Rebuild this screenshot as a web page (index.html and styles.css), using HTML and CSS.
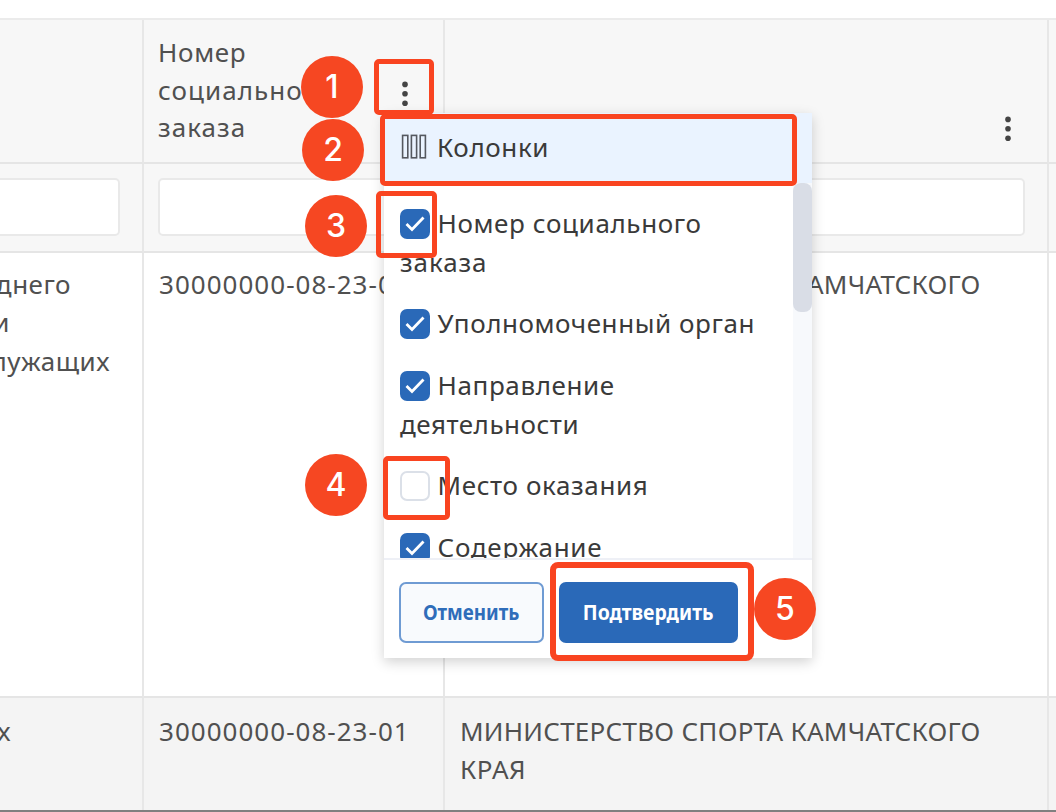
FILE: index.html
```html
<!DOCTYPE html>
<html lang="ru">
<head>
<meta charset="utf-8">
<title>Колонки</title>
<link rel="stylesheet" href="styles.css">
</head>
<body>
<main class="page">
  <div class="grid">
    <div class="cell head"></div>
    <div class="cell head"><span class="t-nomer">Номер</span><span class="t-soc">социального</span><span class="t-zakaza">заказа</span></div>
    <div class="cell head head-menu"><svg class="dots" viewBox="0 0 8 26"><circle cx="4" cy="3.4" r="2.8"/><circle cx="4" cy="12.8" r="2.8"/><circle cx="4" cy="22.2" r="2.8"/></svg></div>
    <div class="cell head"></div>

    <div class="cell filter first"><div class="input"></div></div>
    <div class="cell filter"><div class="input"></div></div>
    <div class="cell filter"><div class="input"></div></div>
    <div class="cell filter"></div>

    <div class="cell row cut"><span class="t-dnego">среднего</span><span class="t-i">и</span><span class="t-sluz">служащих</span></div>
    <div class="cell row"><span class="t-num">30000000-08-23-01</span></div>
    <div class="cell row"><span class="t-min">МИНИСТЕРСТВО СПОРТА КАМЧАТСКОГО</span></div>
    <div class="cell row"></div>

    <div class="cell row alt cut"><span class="t-x">х</span></div>
    <div class="cell row alt"><span class="t-num">30000000-08-23-01</span></div>
    <div class="cell row alt"><span class="t-min">МИНИСТЕРСТВО СПОРТА КАМЧАТСКОГО</span><span class="t-kraya">КРАЯ</span></div>
    <div class="cell row alt"></div>
  </div>

  <svg class="dots dots-over" viewBox="0 0 8 26"><circle cx="4" cy="3.4" r="2.8"/><circle cx="4" cy="12.8" r="2.8"/><circle cx="4" cy="22.2" r="2.8"/></svg>

  <section class="popup">
    <header class="popup-title">
      <svg class="cols" viewBox="0 0 26 26"><rect x="1.6" y="1.4" width="5.2" height="22.4"/><rect x="10.4" y="1.4" width="5.2" height="22.4"/><rect x="19.2" y="1.4" width="5.2" height="22.4"/></svg>
      <span class="p-kol">Колонки</span>
    </header>
    <div class="list-wrap">
      <div class="list">
        <div class="item"><i class="check"><svg viewBox="0 0 30 30"><path d="M6.5 15 12 20.5 23.5 8.5"/></svg></i><span class="p-nom">Номер социального</span><br><span class="p-zak">заказа</span></div>
        <div class="item"><i class="check"><svg viewBox="0 0 30 30"><path d="M6.5 15 12 20.5 23.5 8.5"/></svg></i><span class="p-upo">Уполномоченный орган</span></div>
        <div class="item"><i class="check"><svg viewBox="0 0 30 30"><path d="M6.5 15 12 20.5 23.5 8.5"/></svg></i><span class="p-nap">Направление</span><br><span class="p-dey">деятельности</span></div>
        <div class="item"><i class="check off"></i><span class="p-mes">Место оказания</span></div>
        <div class="item"><i class="check"><svg viewBox="0 0 30 30"><path d="M6.5 15 12 20.5 23.5 8.5"/></svg></i><span class="p-sod">Содержание</span></div>
      </div>
      <div class="scroll"><div class="thumb"></div></div>
    </div>
    <footer class="actions">
      <button class="btn cancel"><span>Отменить</span></button>
      <button class="btn ok"><span>Подтвердить</span></button>
    </footer>
  </section>

  <div class="mark m1"></div>
  <div class="mark m2"></div>
  <div class="mark m3"></div>
  <div class="mark m4"></div>
  <div class="mark m5"></div>
  <div class="pin p1">1</div>
  <div class="pin p2">2</div>
  <div class="pin p3">3</div>
  <div class="pin p4">4</div>
  <div class="pin p5">5</div>
</main>
</body>
</html>
```
FILE: styles.css
```css
* { box-sizing: border-box; }
body { margin: 0; background: #fff; font-family: "Noto Sans", sans-serif; font-size: 26px; color: #505050; }
.page { position: relative; width: 1056px; height: 812px; overflow: hidden; padding-top: 18px; border-bottom: 2px solid #808080; }
span { white-space: nowrap; }

.grid { display: grid; grid-template-columns: 144px 301px 604px 20px; grid-template-rows: 144px 89px 445px 120px; border-top: 2px solid #ebebeb; }
.cell { border-right: 2px solid #e7e7e7; border-bottom: 2px solid #e5e5e5; padding: 14px 14px 0 15px; overflow: hidden; }
.cell span { display: block; }
.head { background: #f7f7f7; line-height: 37.5px; padding-left: 14px; }
.head-menu { display: flex; justify-content: flex-end; align-items: flex-end; padding: 0 35px 20px 0; }
.filter { background: #f7f7f7; padding: 14px 22px 0 14px; }
.first { padding-left: 0; }
.first .input { border-left: 0; border-radius: 0 5px 5px 0; }
.input { height: 58px; border: 2px solid #e9e9e9; border-radius: 5px; background: #fff; }
.row { line-height: 38.3px; padding-top: 12px; }
.alt { background: #f4f4f4; padding-top: 14px; }
.cut { display: flex; flex-direction: column; align-items: flex-end; letter-spacing: .5px; }
.cut .t-dnego { margin-right: 57px; }
.cut .t-i { margin-right: 118px; }
.cut .t-sluz { margin-right: 18px; }
.cut .t-x { margin-right: 117px; }
.t-nomer { letter-spacing: .7px; }
.t-soc, .t-zakaza { letter-spacing: 1.05px; }
.t-num { letter-spacing: 1.02px; }
.t-min { letter-spacing: .26px; }
.t-kraya { letter-spacing: .6px; }
.dots { width: 8px; height: 26px; fill: #444; }
.dots-over { position: absolute; left: 401px; top: 81px; }

.popup { position: absolute; left: 384px; top: 113px; width: 428px; height: 545px; background: #fff; color: #3a3a3a; box-shadow: 0 4px 12px rgba(0,0,0,.18); display: flex; flex-direction: column; letter-spacing: .62px; }
.popup-title { height: 70px; background: #eaf3ff; display: flex; align-items: center; padding: 0 0 2px 17px; gap: 10px; }
.cols { width: 26px; height: 26px; fill: none; stroke: #55585f; stroke-width: 1.6; }
.list-wrap { height: 375px; display: flex; overflow: hidden; }
.list { flex: 1; padding: 21px 0 0 16px; display: flex; flex-direction: column; gap: 23.3px; }
.item { line-height: 38.5px; flex: none; }
.check { display: inline-block; width: 30px; height: 30px; margin: 5px 8px 0 -.5px; border-radius: 7px; background: #2a69b8; vertical-align: top; line-height: 0; }
.check svg { width: 30px; height: 30px; fill: none; stroke: #fff; stroke-width: 2.8; }
.off { background: #fff; border: 2px solid #dbe0e8; }
.p-zak { letter-spacing: .9px; }
.p-upo { letter-spacing: .57px; }
.p-dey { letter-spacing: .52px; }
.p-sod { letter-spacing: .75px; }
.scroll { width: 19px; background: #f7f9fc; }
.thumb { height: 129px; border-radius: 8px; background: #d9dde6; }
.actions { height: 100px; border-top: 2px solid #eef0f6; display: flex; gap: 15px; padding: 22px 0 0 15px; }
.btn { height: 61px; padding: 0 0 3px; border-radius: 7px; font: bold 21.5px "Noto Sans", sans-serif; display: flex; align-items: center; justify-content: center; }
.cancel { width: 145px; border: 2px solid #6f9bd3; background: #f8fafd; color: #2f6dba; }
.ok { width: 179px; border: 0; background: #2a69b8; color: #fff; }
.cancel span { transform: scaleX(.875); }
.ok span { transform: scaleX(.905); }

.mark { position: absolute; border: 5px solid #f94420; border-radius: 5px; }
.m1 { left: 374px; top: 59px; width: 60px; height: 56px; }
.m2 { left: 380px; top: 114px; width: 417px; height: 72px; }
.m3 { left: 376px; top: 191px; width: 61px; height: 67px; }
.m4 { left: 383px; top: 456px; width: 67px; height: 64px; }
.m5 { left: 550px; top: 562px; width: 204px; height: 99px; border-width: 6px; border-radius: 8px; }
.pin { position: absolute; width: 62px; height: 62px; border-radius: 50%; background: #f64722; color: #fff; font: 500 32px/61px Inter, sans-serif; text-align: center; }
.p1 { left: 301px; top: 56px; }
.p2 { left: 302px; top: 119px; }
.p3 { left: 305px; top: 195px; }
.p4 { left: 305px; top: 454px; }
.p5 { left: 754px; top: 578px; }
```
